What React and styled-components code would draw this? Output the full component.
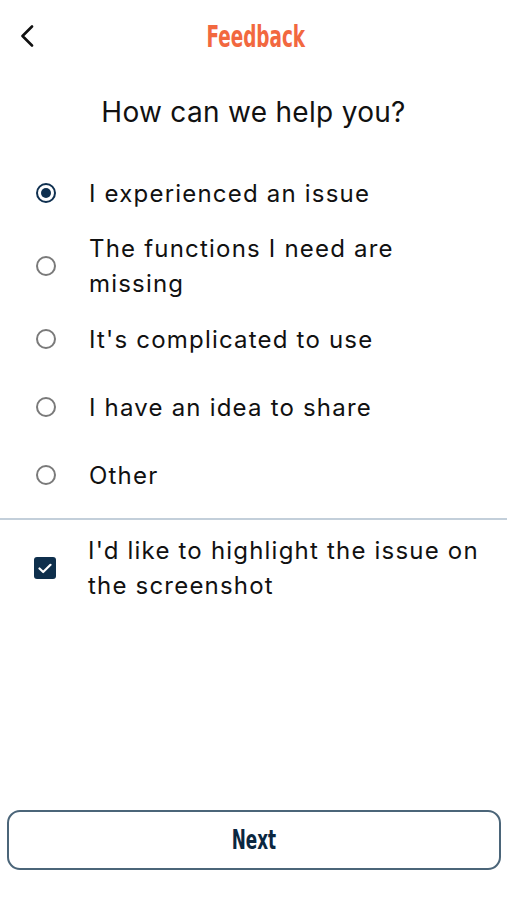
import styled, { createGlobalStyle } from 'styled-components';

const GlobalStyle = createGlobalStyle`
  html, body { margin: 0; padding: 0; background: #fff; }
  body { font-family: Inter, "Liberation Sans", sans-serif; color: #111; }
`;

const Page = styled.div`
  height: 900px;
  display: flex;
  flex-direction: column;
  box-sizing: border-box;
`;

const Header = styled.header`
  height: 72px;
  display: flex;
  align-items: center;
  justify-content: center;
  position: relative;
`;

const BackButton = styled.button`
  position: absolute;
  left: 14px;
  top: 22px;
  width: 26px;
  height: 28px;
  border: 0;
  background: none;
  padding: 0;
  display: flex;
  align-items: center;
  justify-content: center;
`;

const Title = styled.h1`
  margin: 0 0 0 4px;
  font-family: "DejaVu Sans Condensed", "Liberation Sans Narrow", sans-serif;
  font-weight: 700;
  font-size: 31px;
  color: #f2683f;
  transform: scaleX(0.66);
`;

const Question = styled.h2`
  margin: 23px 0 0;
  text-align: center;
  font-weight: 400;
  font-size: 28px;
  line-height: 35px;
  letter-spacing: 0.3px;
`;

const Options = styled.div`
  margin-top: 29px;
  display: flex;
  flex-direction: column;
`;

const Row = styled.label`
  min-height: 68px;
  padding: 4px 16px 4px 36px;
  box-sizing: border-box;
  display: flex;
  align-items: center;
  gap: 33px;
`;

const Radio = styled.span`
  flex: none;
  width: 20px;
  height: 20px;
  border-radius: 50%;
  box-sizing: border-box;
  border: 2px solid ${(p) => (p.checked ? '#0f3050' : '#7a7a7a')};
  display: flex;
  align-items: center;
  justify-content: center;
  &::after {
    content: '';
    width: 10px;
    height: 10px;
    border-radius: 50%;
    background: ${(p) => (p.checked ? '#0f3050' : 'transparent')};
  }
`;

const Text = styled.span`
  font-size: 24px;
  line-height: 35px;
  letter-spacing: 1.2px;
  white-space: nowrap;
`;

const Divider = styled.hr`
  margin: 9px 0 0;
  border: 0;
  height: 2px;
  background: #c3cfda;
`;

const CheckRow = styled(Row)`
  padding-top: 13px;
  padding-left: 34px;
  gap: 32px;
  min-height: 0;
`;

const Check = styled.span`
  flex: none;
  width: 22px;
  height: 22px;
  border-radius: 3px;
  background: #0e2f4c;
  display: flex;
  align-items: center;
  justify-content: center;
`;

const NextButton = styled.button`
  margin: auto 6px 30px 7px;
  height: 60px;
  border: 2px solid #4b6579;
  border-radius: 13px;
  background: #fff;
  font-family: "DejaVu Sans Condensed", "Liberation Sans Narrow", sans-serif;
  font-weight: 700;
  font-size: 26px;
  color: #0b2740;
`;

const NextLabel = styled.span`
  display: inline-block;
  transform: scaleX(0.72);
`;

const options = [
  'I experienced an issue',
  <>The functions I need are<br />missing</>,
  "It's complicated to use",
  'I have an idea to share',
  'Other',
];

export default function App() {
  return (
    <Page>
      <GlobalStyle />
      <Header>
        <BackButton aria-label="Back">
          <svg width="14" height="22" viewBox="0 0 14 22" fill="none">
            <path d="M12 1.5 2.5 11 12 20.5" stroke="#111" strokeWidth="2.6" strokeLinecap="round" strokeLinejoin="round" />
          </svg>
        </BackButton>
        <Title>Feedback</Title>
      </Header>
      <Question>How can we help you?</Question>
      <Options>
        {options.map((o, i) => (
          <Row key={i}>
            <Radio checked={i === 0} />
            <Text>{o}</Text>
          </Row>
        ))}
      </Options>
      <Divider />
      <CheckRow>
        <Check>
          <svg width="14" height="11" viewBox="0 0 14 11" fill="none">
            <path d="M1.5 5.5 5.2 9 12.5 1.8" stroke="#fff" strokeWidth="2.2" strokeLinecap="round" strokeLinejoin="round" />
          </svg>
        </Check>
        <Text>I'd like to highlight the issue on<br />the screenshot</Text>
      </CheckRow>
      <NextButton>
        <NextLabel>Next</NextLabel>
      </NextButton>
    </Page>
  );
}
